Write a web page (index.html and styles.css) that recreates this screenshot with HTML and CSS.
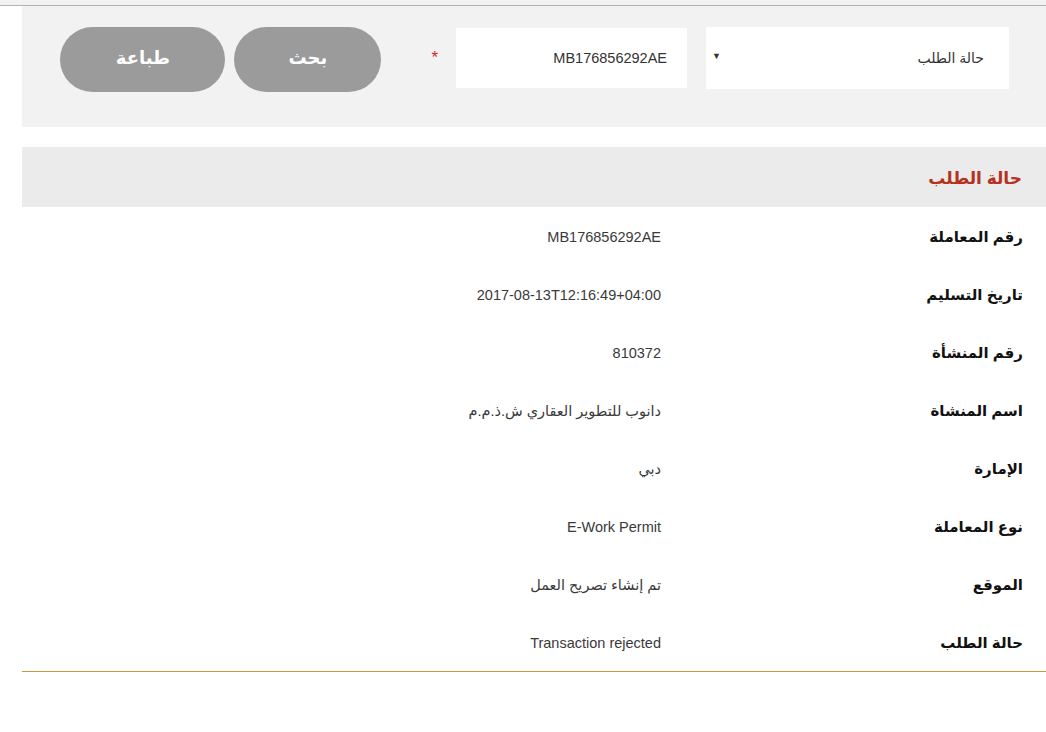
FILE: index.html
```html
<!DOCTYPE html>
<html lang="ar" dir="rtl">
<head>
<meta charset="utf-8">
<title>حالة الطلب</title>
<link rel="stylesheet" href="styles.css">
</head>
<body>
<div class="topbar"></div>
<div class="page">
  <div class="search">
    <div class="select">
      <span class="select-text">حالة الطلب</span>
      <span class="select-arrow">▼</span>
    </div>
    <div class="input">MB176856292AE</div>
    <span class="req">*</span>
    <div class="btn btn-search">بحث</div>
    <div class="btn btn-print">طباعة</div>
  </div>

  <div class="section-head">حالة الطلب</div>

  <div class="details">
    <div class="row"><div class="label">رقم المعاملة</div><div class="value">MB176856292AE</div></div>
    <div class="row"><div class="label">تاريخ التسليم</div><div class="value ltr">2017-08-13T12:16:49+04:00</div></div>
    <div class="row"><div class="label">رقم المنشأة</div><div class="value">810372</div></div>
    <div class="row"><div class="label">اسم المنشاة</div><div class="value">دانوب للتطوير العقاري ش.ذ.م.م</div></div>
    <div class="row"><div class="label">الإمارة</div><div class="value">دبي</div></div>
    <div class="row"><div class="label">نوع المعاملة</div><div class="value">E-Work Permit</div></div>
    <div class="row"><div class="label">الموقع</div><div class="value">تم إنشاء تصريح العمل</div></div>
    <div class="row"><div class="label">حالة الطلب</div><div class="value">Transaction rejected</div></div>
  </div>
</div>
</body>
</html>
```

FILE: styles.css
```css
* { box-sizing: border-box; }
html, body {
  margin: 0;
  padding: 0;
  background: #ffffff;
  font-family: "Liberation Sans", "DejaVu Sans", sans-serif;
  color: #333333;
}
.topbar {
  height: 6px;
  background: #f2f2f2;
  border-bottom: 1px solid #b4b4b4;
}
.page {
  margin-left: 22px;
}
.search {
  background: #f2f2f2;
  height: 121px;
  display: flex;
  align-items: flex-start;
  padding-top: 21px;
  padding-right: 37px;
}
.select {
  width: 303px;
  height: 62px;
  background: #fff;
  display: flex;
  align-items: center;
  justify-content: space-between;
  padding: 0 25px 0 6px;
  font-size: 14px;
  color: #333;
}
.select-arrow {
  font-size: 9px;
  color: #333;
  margin-top: -4px;
}
.input {
  width: 231px;
  height: 60px;
  margin-top: 1px;
  margin-right: 19px;
  background: #fff;
  display: flex;
  align-items: center;
  padding-right: 20px;
  font-size: 14.5px;
  color: #333;
}
.req {
  color: #e02020;
  font-size: 17px;
  margin-right: 18px;
  margin-top: 22px;
  line-height: 1;
}
.btn {
  height: 65px;
  border-radius: 33px;
  background: #9b9b9b;
  color: #fff;
  font-weight: bold;
  font-size: 18px;
  display: flex;
  align-items: center;
  justify-content: center;
  padding-bottom: 3px;
}
.btn-search {
  width: 147px;
  margin-right: 50px;
}
.btn-print {
  width: 165px;
  margin-right: 9px;
}
.section-head {
  margin-top: 20px;
  height: 60px;
  background: #ebebeb;
  display: flex;
  align-items: center;
  padding-right: 24px;
  color: #b5321e;
  font-weight: bold;
  font-size: 17px;
  padding-top: 2px;
}
.details {
  border-bottom: 1px solid #c49a3c;
}
.row {
  height: 58px;
  display: grid;
  grid-template-columns: 385px 1fr;
  align-items: center;
  padding-top: 2px;
}
.label {
  padding-right: 23px;
  font-weight: bold;
  font-size: 15px;
  color: #111;
}
.value {
  font-size: 14.5px;
  color: #3a3a3a;
}
.ltr {
  direction: ltr;
  text-align: right;
}
```
